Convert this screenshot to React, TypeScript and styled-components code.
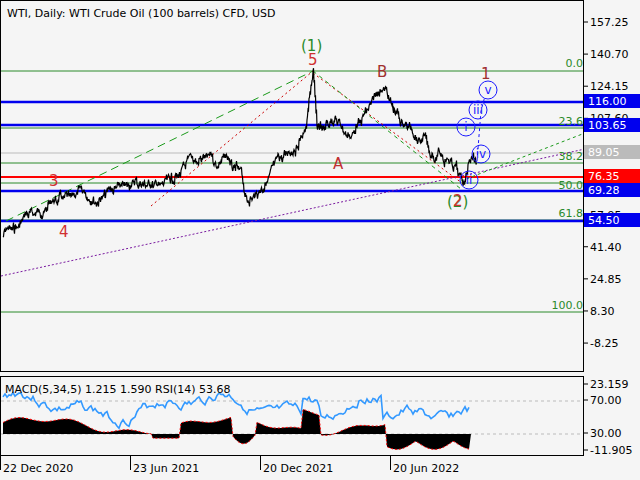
import styled, { createGlobalStyle } from 'styled-components'

const Global = createGlobalStyle`
	body { margin: 0; background: #f5f5f5; font-family: Tahoma, 'DejaVu Sans', sans-serif; }
`
const Page = styled.div`
	width: 640px;
	height: 480px;
	display: flex;
	flex-direction: column;
	background: #f5f5f5;
	overflow: hidden;
`
const Pane = styled.div<{ $h: number }>`
	height: ${(p) => p.$h}px;
	display: flex;
	flex-direction: row;
`
const Plot = styled.svg<{ $h: number }>`
	width: 584px;
	height: ${(p) => p.$h}px;
	display: block;
	box-sizing: border-box;
	border: 1px solid #000;
`
const Axis = styled.svg<{ $h: number }>`
	width: 56px;
	height: ${(p) => p.$h}px;
	display: block;
	overflow: visible;
`
const Gap = styled.div`
	height: 4px;
`
const DateRow = styled.div`
	height: 24px;
	width: 584px;
	display: flex;
	font-size: 11px;
	font-family: 'DejaVu Sans', sans-serif;
`
const DateLabel = styled.div`
	width: 127px;
	padding: 4px 0 0 2px;
	border-left: 1px solid #000;
	height: 10px;
	line-height: 18px;
	white-space: nowrap;
`

const py = (p: number) => 22 + (157.25 - p) * 1.94

const keys: [number, number][] = [
	[2, 235], [30, 215], [60, 200], [100, 195], [130, 183], [160, 185], [200, 160], [225, 160],
	[240, 178], [246, 200], [260, 185], [275, 165], [295, 145], [305, 125], [312, 72], [316, 130],
	[330, 120], [350, 130], [370, 105], [382, 86], [395, 115], [410, 130], [430, 150], [450, 160],
	[462, 182], [468, 160], [472, 148], [476, 162],
]
function makeRnd(s: number) {
	let seed = s
	return () => {
		seed = (seed * 9301 + 49297) % 233280
		return seed / 233280
	}
}
function series() {
	const pts: string[] = []
	const rnd = makeRnd(7)
	let walk = 0
	for (let i = 0; i < keys.length - 1; i++) {
		const [x0, y0] = keys[i]
		const [x1, y1] = keys[i + 1]
		for (let x = x0; x < x1; x++) {
			const t = (x - x0) / (x1 - x0)
			walk = walk * 0.8 + (rnd() - 0.5) * 9
			const y = y0 + (y1 - y0) * t + walk
			pts.push(`${x},${y.toFixed(1)}`)
			pts.push(`${x + 0.5},${(y + (rnd() - 0.5) * 8).toFixed(1)}`)
		}
	}
	return pts.join(' ')
}
const price = series()

function rsiLine() {
	const pts: string[] = []
	const rnd = makeRnd(3)
	let walk = 0
	for (let x = 2; x < 470; x += 2) {
		walk = walk * 0.7 + (rnd() - 0.5) * 8
		let base = 30 - 9 * Math.sin(x / 30 + 1) - 5 * Math.sin(x / 11)
		if (x > 300 && x < 320) base -= 14
		if (x > 380) base = 38 - 4 * Math.sin(x / 9)
		pts.push(`${x},${Math.max(6, Math.min(62, base + walk)).toFixed(1)}`)
	}
	return pts.join(' ')
}
function macdPts() {
	const pts: string[] = []
	for (let x = 2; x < 470; x += 2) {
		let v = 6 + 5 * Math.sin(x / 30 + 0.3) + 2 * Math.sin(x / 9)
		if (x > 150 && x < 180) v = -3
		if (x > 230 && x < 255) v = -7 * Math.sin(((x - 230) / 25) * Math.PI)
		if (x > 300 && x < 320) v += 14
		if (x > 385) v = -Math.abs(6 * Math.sin(x / 12)) - 5
		pts.push(`${x},${(57 - v * 1.4).toFixed(1)}`)
	}
	return pts
}
const macd = macdPts()

function HLine({ y, c, w = 1, dash }: { y: number; c: string; w?: number; dash?: string }) {
	return <line x1={0} x2={584} y1={y} y2={y} stroke={c} strokeWidth={w} strokeDasharray={dash} />
}
function Circ({ x, y, t }: { x: number; y: number; t: string }) {
	return (
		<g>
			<circle cx={x} cy={y} r={9} fill="none" stroke="#1a1aff" strokeWidth={1} />
			<text x={x} y={y + 4} fontSize={12} fill="#1a1aff" textAnchor="middle">{t}</text>
		</g>
	)
}
function Tag({ y, t, bg }: { y: number; t: string; bg: string }) {
	return (
		<g>
			<rect x={0} y={y - 7} width={56} height={14} fill={bg} />
			<text x={4} y={y + 4} fill="#fff" fontSize={11}>{t}</text>
		</g>
	)
}

export default function App() {
	const ticks = [157.25, 140.7, 124.15, 107.6, 57.95, 41.4, 24.85, 8.3, -8.25]
	return (
		<Page>
			<Global />
			<Pane $h={372}>
				<Plot $h={372} fontFamily="'DejaVu Sans', sans-serif">
					<text x={6} y={16} fontSize={11}>WTI, Daily:  WTI Crude Oil (100 barrels) CFD, USD</text>
					<HLine y={70} c="#2a8a2a" />
					<HLine y={127} c="#2a8a2a" />
					<HLine y={162} c="#2a8a2a" />
					<HLine y={182} c="#2a8a2a" />
					<HLine y={219} c="#2a8a2a" />
					<HLine y={311} c="#2a8a2a" />
					<HLine y={152} c="#bbb" />
					<HLine y={101} c="#0000ee" w={2.5} />
					<HLine y={124} c="#0000ee" w={2.5} />
					<HLine y={190} c="#0000ee" w={2.5} />
					<HLine y={220} c="#0000ee" w={2.5} />
					<HLine y={176} c="#ff0000" w={2} />
					<g fontSize={11} fill="#2a8a2a" textAnchor="end">
						<text x={582} y={66}>0.0</text>
						<text x={582} y={124}>23.6</text>
						<text x={582} y={159}>38.2</text>
						<text x={582} y={188}>50.0</text>
						<text x={582} y={216}>61.8</text>
						<text x={582} y={308}>100.0</text>
					</g>
					<line x1={5} y1={220} x2={312} y2={70} stroke="#1a9a1a" strokeDasharray="8 5" />
					<line x1={150} y1={205} x2={312} y2={70} stroke="#c00" strokeDasharray="2 3" />
					<line x1={312} y1={72} x2={465} y2={185} stroke="#c00" strokeDasharray="2 3" />
					<line x1={312} y1={70} x2={460} y2={188} stroke="#1a9a1a" strokeDasharray="4 4" />
					<line x1={0} y1={275} x2={584} y2={148} stroke="#7a1aa0" strokeDasharray="2 2" />
					<line x1={460} y1={180} x2={584} y2={132} stroke="#1a9a1a" strokeDasharray="3 3" />
					<polyline points="476,160 480,110 484,95" fill="none" stroke="#1a1aff" strokeDasharray="3 3" />
					<polyline points={price} fill="none" stroke="#000" strokeWidth={1.2} />
					<g fontSize={15}>
						<text x={300} y={50} fill="#2a8a2a">(1)</text>
						<text x={307} y={64} fill="#d03030">5</text>
						<text x={376} y={76} fill="#a03030">B</text>
						<text x={332} y={168} fill="#c03030">A</text>
						<text x={48} y={185} fill="#d03030">3</text>
						<text x={58} y={236} fill="#d03030">4</text>
						<text x={480} y={78} fill="#a03030">1</text>
						<text x={446} y={206} fill="#2a8a2a">(2)</text>
						<text x={452} y={205} fill="#d03030">2</text>
					</g>
					<Circ x={487} y={89} t="v" />
					<Circ x={477} y={109} t="iii" />
					<Circ x={465} y={126} t="i" />
					<Circ x={480} y={153} t="iv" />
					<Circ x={468} y={179} t="ii" />
				</Plot>
				<Axis $h={372} fontFamily="'DejaVu Sans', sans-serif" fontSize={11}>
					{ticks.map((t) => (
						<g key={t}>
							<line x1={0} x2={4} y1={py(t)} y2={py(t)} stroke="#000" />
							<text x={6} y={py(t) + 4}>{t.toFixed(2)}</text>
						</g>
					))}
					<Tag y={101} t="116.00" bg="#0000ee" />
					<Tag y={125} t="103.65" bg="#0000ee" />
					<Tag y={152} t="89.05" bg="#bbb" />
					<Tag y={176} t="76.35" bg="#ff0000" />
					<Tag y={190} t="69.28" bg="#0000ee" />
					<Tag y={220} t="54.50" bg="#0000ee" />
				</Axis>
			</Pane>
			<Gap />
			<Pane $h={80}>
				<Plot $h={80} fontFamily="'DejaVu Sans', sans-serif">
					<HLine y={24} c="#bbb" dash="3 3" />
					<HLine y={57} c="#bbb" dash="3 3" />
					<polygon points={['2,57', ...macd, '470,57'].join(' ')} fill="#000" />
					<polyline points={macd.join(' ')} fill="none" stroke="#f00" strokeDasharray="2 2" />
					<polyline points={rsiLine()} fill="none" stroke="#3399ff" strokeWidth={1.6} />
					<text x={4} y={16} fontSize={11}>MACD(5,34,5) 1.215 1.590 RSI(14) 53.68</text>
				</Plot>
				<Axis $h={80} fontFamily="'DejaVu Sans', sans-serif" fontSize={11}>
					{[
						[8, '23.159'],
						[24, '70.00'],
						[57, '30.00'],
						[74, '-11.905'],
					].map(([y, t]) => (
						<g key={t}>
							<line x1={0} x2={4} y1={y} y2={y} stroke="#000" />
							<text x={6} y={(y as number) + 4}>{t}</text>
						</g>
					))}
				</Axis>
			</Pane>
			<DateRow>
				<DateLabel>22 Dec 2020</DateLabel>
				<DateLabel>23 Jun 2021</DateLabel>
				<DateLabel>20 Dec 2021</DateLabel>
				<DateLabel>20 Jun 2022</DateLabel>
			</DateRow>
		</Page>
	)
}
